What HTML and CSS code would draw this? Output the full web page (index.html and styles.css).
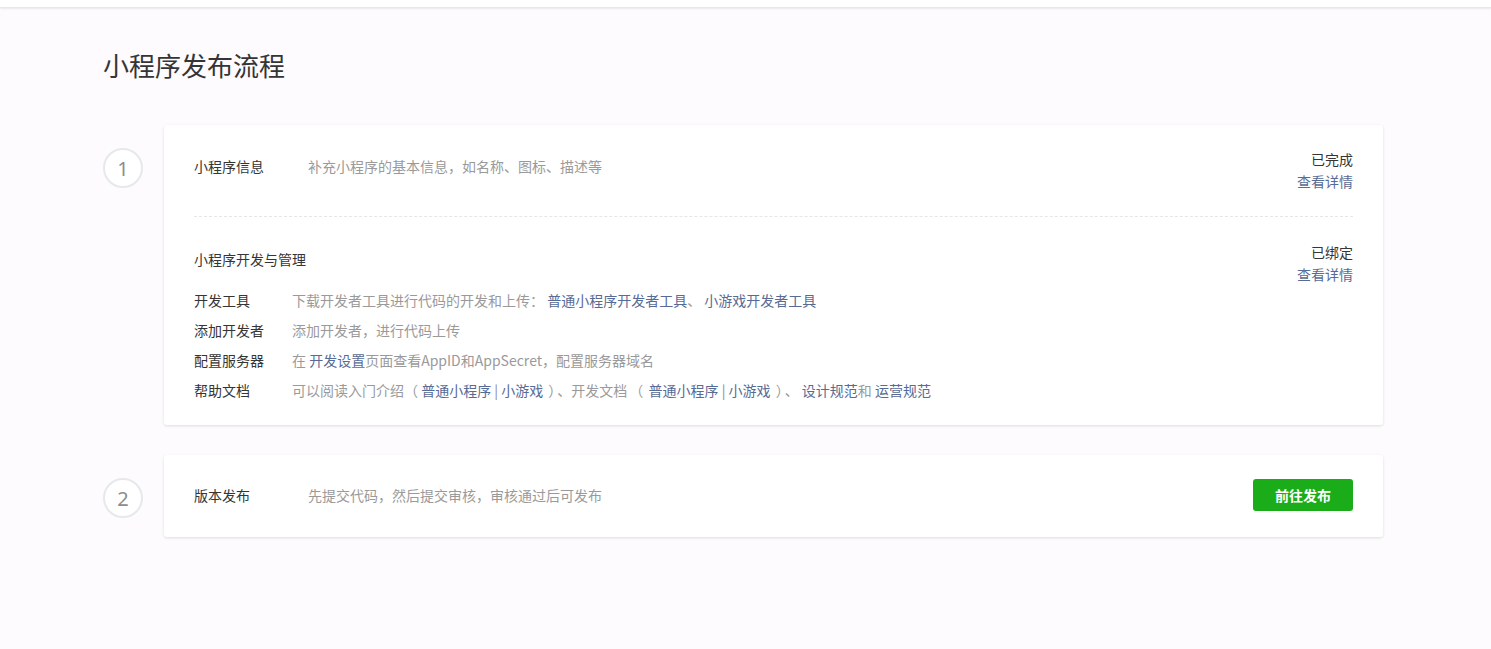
FILE: index.html
```html
<!DOCTYPE html>
<html lang="zh-CN">
<head>
<meta charset="utf-8">
<title>小程序发布流程</title>
<link rel="stylesheet" href="styles.css">
</head>
<body>
<div class="topbar"></div>
<main class="main">
  <h1 class="title">小程序发布流程</h1>

  <div class="step">
    <div class="step-num">1</div>
    <div class="card">
      <div class="section section-first">
        <div class="sec-head">
          <div class="sec-title">小程序信息</div>
          <div class="sec-desc">补充小程序的基本信息，如名称、图标、描述等</div>
          <div class="sec-status">
            <div class="status">已完成</div>
            <a class="link" href="#">查看详情</a>
          </div>
        </div>
      </div>
      <div class="section section-second">
        <div class="sec-head">
          <div class="sec-title">小程序开发与管理</div>
          <div class="sec-desc"></div>
          <div class="sec-status">
            <div class="status">已绑定</div>
            <a class="link" href="#">查看详情</a>
          </div>
        </div>
        <ul class="list">
          <li class="item"><span class="item-label">开发工具</span><span class="item-desc">下载开发者工具进行代码的开发和上传： <a class="link" href="#">普通小程序开发者工具</a>、 <a class="link" href="#">小游戏开发者工具</a></span></li>
          <li class="item"><span class="item-label">添加开发者</span><span class="item-desc">添加开发者，进行代码上传</span></li>
          <li class="item"><span class="item-label">配置服务器</span><span class="item-desc">在 <a class="link" href="#">开发设置</a>页面查看AppID和AppSecret，配置服务器域名</span></li>
          <li class="item"><span class="item-label">帮助文档</span><span class="item-desc">可以阅读入门介绍（ <a class="link" href="#">普通小程序</a> <span class="sep">|</span> <a class="link" href="#">小游戏</a> <span class="paren">）</span>、开发文档<span class="paren">（</span> <a class="link" href="#">普通小程序</a> <span class="sep">|</span> <a class="link" href="#">小游戏</a> <span class="paren">）</span>、 <a class="link" href="#">设计规范</a>和 <a class="link" href="#">运营规范</a></span></li>
        </ul>
      </div>
    </div>
  </div>

  <div class="step">
    <div class="step-num">2</div>
    <div class="card">
      <div class="section section-publish">
        <div class="sec-title-c">版本发布</div>
        <div class="sec-desc-c">先提交代码，然后提交审核，审核通过后可发布</div>
        <button class="btn" type="button">前往发布</button>
      </div>
    </div>
  </div>
</main>
</body>
</html>
```

FILE: styles.css
```css
* { box-sizing: border-box; }
html, body {
  margin: 0;
  padding: 0;
  background: #fdfbfe;
  font-family: "Microsoft YaHei", "Noto Sans CJK SC", "Noto Sans", sans-serif;
  color: #353535;
  font-size: 14px;
}
.topbar {
  height: 8px;
  background: #fff;
  box-shadow: 0 1px 2px rgba(0, 0, 0, 0.08);
  border-bottom: 1px solid #e7e7eb;
}
.main {
  width: 1280px;
  margin-left: 103px;
  padding-top: 39px;
}
.title {
  margin: 0 0 42px 0;
  font-size: 26px;
  font-weight: 400;
  line-height: 36px;
  color: #353535;
}
.step {
  display: flex;
  align-items: flex-start;
  margin-bottom: 30px;
}
.step-num {
  flex: none;
  width: 40px;
  height: 40px;
  margin-top: 23px;
  margin-right: 21px;
  border: 2px solid #e7e8ec;
  border-radius: 50%;
  display: flex;
  align-items: center;
  justify-content: center;
  font-family: "Microsoft YaHei", "Noto Sans", sans-serif;
  font-size: 20px;
  color: #8d8d8d;
  background: #fff;
}
.card {
  flex: 1;
  background: #fff;
  border-radius: 3px;
  box-shadow: 0 1px 3px rgba(0, 0, 0, 0.12);
  padding: 0 30px;
}
.section-first {
  padding: 23px 0 24px;
  border-bottom: 1px dashed #e4e6ea;
}
.section-second {
  padding: 24px 0 20px;
}
.sec-head {
  display: flex;
  align-items: flex-start;
}
.sec-title {
  width: 114px;
  flex: none;
  margin-top: 7px;
  font-size: 14px;
  line-height: 22px;
  color: #353535;
}
.sec-desc {
  flex: 1;
  margin-top: 7px;
  font-size: 14px;
  line-height: 22px;
  color: #9a9a9a;
}
.sec-status {
  text-align: right;
  font-size: 14px;
  line-height: 22px;
}
.status { color: #353535; }
.link {
  color: #576b95;
  text-decoration: none;
}
.list {
  list-style: none;
  margin: 0;
  padding: 0;
}
.item {
  display: flex;
  line-height: 30px;
  font-size: 14px;
}
.item-label {
  width: 98px;
  flex: none;
  color: #353535;
}
.item-desc {
  color: #9a9a9a;
}
.sep { color: #8a8a8a; }
.paren { margin: 0 2px; }
.section-publish {
  display: flex;
  align-items: center;
  padding: 24px 0 26px;
}
.sec-title-c {
  width: 114px;
  flex: none;
  font-size: 14px;
  color: #353535;
}
.sec-desc-c {
  flex: 1;
  font-size: 14px;
  color: #9a9a9a;
}
.btn {
  width: 100px;
  height: 32px;
  border: none;
  border-radius: 3px;
  background: #1aad19;
  color: #fff;
  font-family: "Microsoft YaHei", "Noto Sans CJK SC", sans-serif;
  font-size: 14px;
  font-weight: 700;
  cursor: pointer;
}
```
